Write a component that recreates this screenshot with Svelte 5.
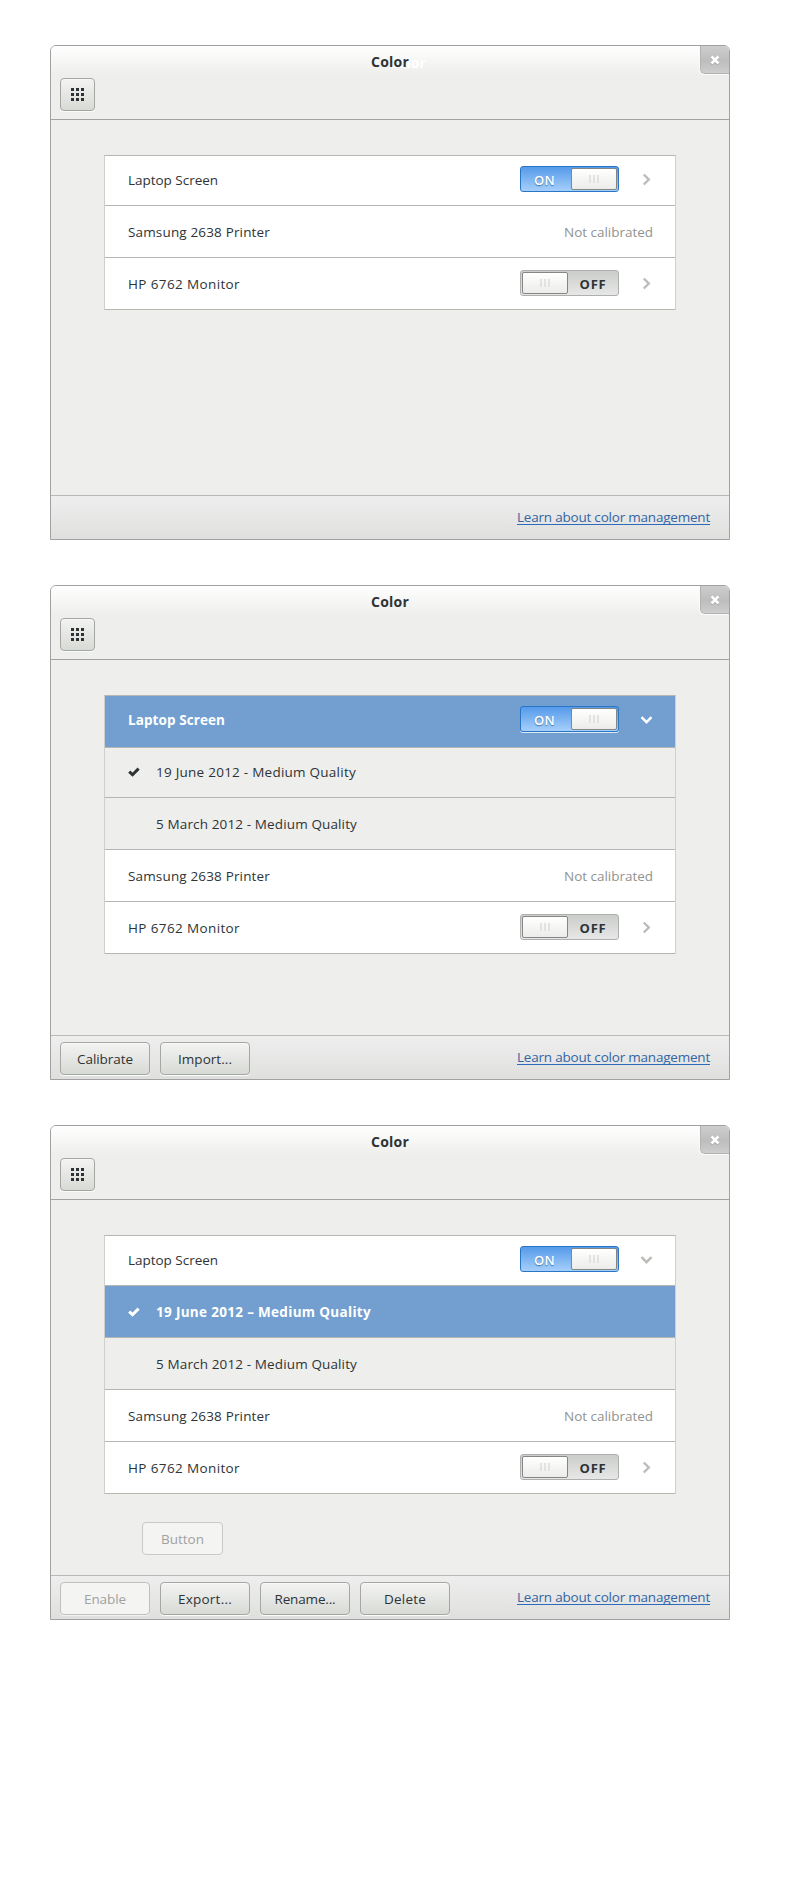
<script>
  // Stretches letter spacing so a label takes exactly the given width.
  function fit(node, width) {
    const n = node.textContent.length;
    const spare = width - node.getBoundingClientRect().width;
    node.style.letterSpacing = spare / n + 'px';
  }

  const printer = { label: 'Samsung 2638 Printer', w: 142, note: 'Not calibrated' };
  const monitor = { label: 'HP 6762 Monitor', w: 112, toggle: 'off', arrow: 'right' };
  const march = { label: '5 March 2012 - Medium Quality', w: 201, sub: true };
  const june = { label: '19 June 2012 - Medium Quality', w: 200, sub: true, check: true };
  const laptop = { label: 'Laptop Screen', w: 90, toggle: 'on', short: true };

  const windows = [
    { ghost: true, rows: [{ ...laptop, arrow: 'right' }, printer, monitor], actions: [] },
    {
      rows: [{ ...laptop, w: 97, arrow: 'down', selected: true, short: false, lifted: true }, { ...june, short: true }, march, printer, monitor],
      actions: [{ label: 'Calibrate', w: 56 }, { label: 'Import...', w: 54 }]
    },
    {
      rows: [{ ...laptop, arrow: 'down' }, { ...june, label: '19 June 2012 – Medium Quality', w: 215, selected: true }, march, printer, monitor],
      floating: true,
      actions: [{ label: 'Enable', w: 42, disabled: true }, { label: 'Export...', w: 54 }, { label: 'Rename...', w: 61 }, { label: 'Delete', w: 42 }]
    }
  ];
</script>

<main>
  {#each windows as win}
    <section class="window">
      <header>
        <div class="titlebar">
          {#if win.ghost}<span class="ghost" aria-hidden="true">Color</span>{/if}
          <h1><span use:fit={38}>Color</span></h1>
          <button class="close" aria-label="Close">
            <svg width="10" height="11" viewBox="0 0 10 11"><path d="M1.5 2.5 8.5 9.5M8.5 2.5 1.5 9.5" stroke="#777" stroke-opacity=".5" stroke-width="2.4" /><path d="M1.5 1.5 8.5 8.5M8.5 1.5 1.5 8.5" stroke="#fff" stroke-width="2.6" /></svg>
          </button>
        </div>
        <button class="btn grid" aria-label="All settings">
          <svg width="13" height="13" viewBox="0 0 13 13" fill="#2e3436" shape-rendering="crispEdges">
            {#each [0, 5, 10] as y}{#each [0, 5, 10] as x}<rect {x} {y} width="3" height="3" />{/each}{/each}
          </svg>
        </button>
      </header>

      <div class="body">
        <div class="list">
          {#each win.rows as row}
            <div class="row" class:short={row.short} class:lifted={row.lifted} class:sub={row.sub} class:selected={row.selected}>
              {#if row.sub}
                <span class="mark">
                  {#if row.check}<svg width="12" height="10" viewBox="0 0 12 10"><path d="M1.2 4.7 4.5 7.7 10.6 1.6" fill="none" stroke="currentColor" stroke-width="3" /></svg>{/if}
                </span>
              {/if}
              <span class="label"><span class="fit" use:fit={row.w}>{row.label}</span></span>
              {#if row.note}<span class="note"><span class="fit" use:fit={89}>{row.note}</span></span>{/if}
              {#if row.toggle}
                <div class="switch {row.toggle}">
                  <span class="state"><span class="fit" use:fit={row.toggle === 'on' ? 21 : 27}>{row.toggle.toUpperCase()}</span></span>
                  <span class="knob"><i></i><i></i><i></i></span>
                </div>
              {/if}
              {#if row.arrow}
                <span class="arrow">
                  <svg width="13" height="13" viewBox="0 0 13 13" fill="none" stroke="currentColor" stroke-width="2.4">
                    {#if row.arrow === 'right'}<path d="M3.8 1.5 8.8 6.5 3.8 11.5" />{:else}<path d="M1.5 4.2 6.5 9.2 11.5 4.2" />{/if}
                  </svg>
                </span>
              {/if}
            </div>
          {/each}
        </div>
        {#if win.floating}<button class="btn disabled loose"><span class="fit" use:fit={43}>Button</span></button>{/if}
      </div>

      <footer>
        {#each win.actions as a}
          <button class="btn" class:disabled={a.disabled}><span class="fit" use:fit={a.w}>{a.label}</span></button>
        {/each}
        <a href="#learn"><span class="fit" use:fit={193}>Learn about color management</span></a>
      </footer>
    </section>
  {/each}
</main>

<style>
  :global(body) { background: #fff; }
  main {
    box-sizing: border-box;
    width: 800px;
    height: 1900px;
    padding: 45px 0 0 50px;
    display: flex;
    flex-direction: column;
    gap: 45px;
    font: 13.5px/20px "Open Sans", "Noto Sans", sans-serif;
    color: #2e3436;
  }
  .window {
    box-sizing: border-box;
    width: 680px;
    height: 495px;
    border: 1px solid #a1a1a1;
    border-radius: 6px 6px 0 0;
    background: #eeeeec;
    display: flex;
    flex-direction: column;
    overflow: hidden;
  }
  header {
    box-sizing: border-box;
    height: 74px;
    border-bottom: 1px solid #a1a1a1;
    background: linear-gradient(#fff, #eeeeec 29px);
  }
  .titlebar { position: relative; height: 32px; }
  h1 { margin: 0; padding-top: 6px; text-align: center; font-size: 14px; line-height: 20px; font-weight: 700; position: relative; }
  h1 span, .fit { display: inline-block; white-space: nowrap; }
  .ghost { position: absolute; left: 338px; top: 7px; font-size: 14px; font-weight: 700; color: #fff; width: 38px; }
  .close {
    position: absolute;
    right: 0;
    top: 0;
    box-sizing: border-box;
    width: 29px;
    height: 28px;
    padding: 1px 1px 0 0;
    border: solid #b3b3b3;
    border-width: 0 0 1px 1px;
    border-radius: 0 0 0 5px;
    background: linear-gradient(#cdcdcd, #bdbdbd 55%, #cecece);
    box-shadow: -1px 1px 0 #fafafa;
    display: flex;
    align-items: center;
    justify-content: center;
  }
  .btn {
    box-sizing: border-box;
    width: 90px;
    height: 33px;
    padding: 1px 0 0;
    border: 1px solid #a4a8a3;
    border-radius: 4px;
    background: linear-gradient(#f3f4f2, #d8dad6);
    box-shadow: 0 1px 0 #fafafa, inset 0 1px 0 #f8f9f7;
    font: inherit;
    color: inherit;
    display: flex;
    align-items: center;
    justify-content: center;
  }
  .btn.grid { width: 35px; margin-left: 9px; padding: 0; }
  .btn.disabled { background: #f4f4f2; border-color: #bec0bb; color: #a0a2a1; box-shadow: 0 1px 0 #f1f1ef; }
  .btn.loose { width: 81px; margin: 28px 0 0 38px; border-color: #c9cac7; }
  .body { flex: 1; padding: 35px 53px 0; }
  .list { border: 1px solid #cfd0cb; border-top-color: #b5b6b2; border-bottom: 0; background: #fff; }
  .row {
    box-sizing: border-box;
    height: 52px;
    padding: 2px 22px 3px 23px;
    border-bottom: 1px solid #b5b6b2;
    display: flex;
    align-items: center;
  }
  .row.short { height: 50px; padding-top: 0; }
  .row.lifted { padding: 0 22px 5px 23px; }
  .row.sub { background: #eeeeec; }
  .row.selected { background: #729fcf; color: #fff; font-weight: 700; }
  .mark { width: 28px; height: 10px; display: flex; }
  .mark svg { margin-top: 1px; }
  .label { flex: 1; padding-top: 1px; }
  .note { color: #91938f; padding-top: 1px; }
  .arrow { width: 13px; height: 13px; margin: 0 0 0 21px; color: #babcb8; display: flex; }
  .selected .arrow { color: #fff; }
  .switch {
    box-sizing: border-box;
    width: 99px;
    height: 26px;
    padding: 1px;
    border: 1px solid #aeb0ae;
    border-radius: 3px;
    background: linear-gradient(#cbcdcb, #e6e7e6);
    display: flex;
    justify-content: space-between;
    font-weight: 600;
    font-size: 13px;
  }
  .switch.off { flex-direction: row-reverse; }
  .switch.on { border-color: #2a76c6; background: linear-gradient(#559ae9, #a5cffb); color: #fff; text-shadow: 0 1px 1px #4778aa; }
  .selected .switch { box-shadow: 0 1px 0 #e0eaf5; }
  .state { flex: 1; text-align: center; line-height: 24px; }
  .on .state { padding-right: 4px; }
  .off .state { padding-left: 1px; font-weight: 700; }
  .knob {
    box-sizing: border-box;
    width: 46px;
    height: 22px;
    border: 1px solid #858784;
    border-radius: 2px;
    background: linear-gradient(#fff, #ececea);
    display: flex;
    align-items: center;
    justify-content: center;
    gap: 2px;
  }
  .knob i { width: 2px; height: 8px; background: #e2e3e1; }
  footer {
    box-sizing: border-box;
    height: 44px;
    padding: 6px 19px 0 9px;
    border-top: 1px solid #b9bab6;
    background: linear-gradient(#eee, #dfe0de);
    display: flex;
    gap: 10px;
  }
  a { margin-left: auto; height: 23px; color: #3465a4; text-decoration: none; }
  a .fit { height: 17px; padding-top: 5px; border-bottom: 1px solid #2c6bbb; }
</style>
